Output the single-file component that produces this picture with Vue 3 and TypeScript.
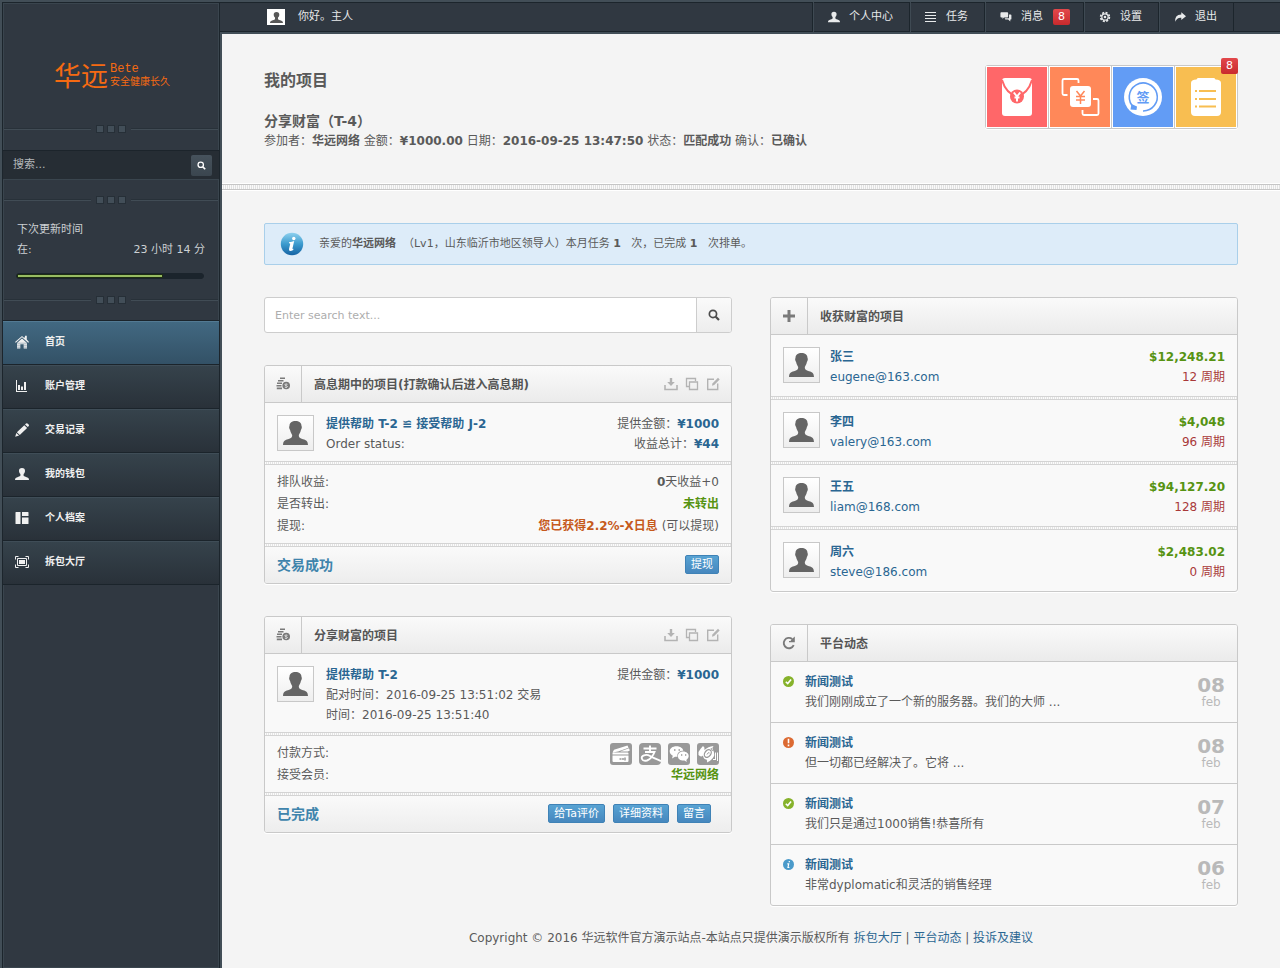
<script setup lang="ts">
import { ref } from 'vue'

interface NavItem { label: string; icon: string }
interface Member { name: string; email: string; amount: string; period: string }
interface News { state: string; title: string; text: string; day: string }

const nav: NavItem[] = [
  { label: '首页', icon: 'home' },
  { label: '账户管理', icon: 'chart' },
  { label: '交易记录', icon: 'pencil' },
  { label: '我的钱包', icon: 'user' },
  { label: '个人档案', icon: 'blocks' },
  { label: '拆包大厅', icon: 'frame' },
]
const active = ref('首页')

const topLinks = [
  { label: '个人中心', icon: 'user', count: 0 },
  { label: '任务', icon: 'list', count: 0 },
  { label: '消息', icon: 'chat', count: 8 },
  { label: '设置', icon: 'gear', count: 0 },
  { label: '退出', icon: 'exit', count: 0 },
]

const members: Member[] = [
  { name: '张三', email: 'eugene@163.com', amount: '$12,248.21', period: '12 周期' },
  { name: '李四', email: 'valery@163.com', amount: '$4,048', period: '96 周期' },
  { name: '王五', email: 'liam@168.com', amount: '$94,127.20', period: '128 周期' },
  { name: '周六', email: 'steve@186.com', amount: '$2,483.02', period: '0 周期' },
]

const news: News[] = [
  { state: 'ok', title: '新闻测试', text: '我们刚刚成立了一个新的服务器。我们的大师 ...', day: '08' },
  { state: 'warn', title: '新闻测试', text: '但一切都已经解决了。它将 ...', day: '08' },
  { state: 'ok', title: '新闻测试', text: '我们只是通过1000销售!恭喜所有', day: '07' },
  { state: 'info', title: '新闻测试', text: '非常dyplomatic和灵活的销售经理', day: '06' },
]

const progress = 78
const sideQuery = ref('')
const query = ref('')
</script>

<template>
  <svg class="defs" width="0" height="0" aria-hidden="true">
    <symbol id="i-person" viewBox="0 0 25 24">
      <path d="M12.500 0C16 0 18.500 1.500 18.500 5C19.200 5.500 18.800 8 17.900 9C17.500 11.500 16.200 13 15.800 14C15.600 16.500 17 17.500 20 18.200C23.500 19 24.800 20 25 24H0C.2 20 1.500 19 5 18.200C8 17.500 9.400 16.500 9.200 14C8.800 13 7.500 11.500 7.100 9C6.200 8 5.800 5.500 6.500 5C6.500 1.500 9 0 12.500 0Z" />
    </symbol>
    <symbol id="i-user" viewBox="0 0 14 14">
      <path d="M7 1c2 0 3.200 1.100 3 3.100-.1 1.400-.6 2.300-1.400 2.900v1.600c0 .6 1 .9 2.400 1.400 2 .6 3 1.200 3 3H0c0-1.800 1-2.400 3-3 1.400-.5 2.400-.8 2.400-1.400V7C4.600 6.400 4.100 5.500 4 4.100 3.800 2.100 5 1 7 1Z" />
    </symbol>
    <symbol id="i-home" viewBox="0 0 14 14">
      <path d="M10 1.500V.8h1.800v3.700L14 7l-.8.800L7 2.300.8 7.800 0 7l7-6 2.300 2z" />
      <path d="M7 3.500l5 4.500v5.500H8.700V9.300H5.300v4.200H2V8z" />
      <path d="M2 8.200h10M2 10.200h3M9 10.200h3M2 12.200h3M9 12.200h3" stroke="#3c6078" stroke-width=".4" />
    </symbol>
    <symbol id="i-chart" viewBox="0 0 14 14">
      <path d="M1 1h1v11h10v1H1zM3 6h2v5H3zM6 7.500h2V11H6zM9 3h2v8H9z" />
    </symbol>
    <symbol id="i-pencil" viewBox="0 0 14 14">
      <path d="M10 1.500l1-1Q12-.1 13.200 1.100T13.800 3l-1 1zM9.300 2.200l2.800 2.700-7.300 7L1.900 9.200zM1.300 9.900l2.800 2.600L.2 13.800z" />
    </symbol>
    <symbol id="i-blocks" viewBox="0 0 14 14">
      <path d="M1 1h4.500v12H1q-.5 0-.5-.5v-11Q.5 1 1 1zM7 1h6q.5 0 .5.500V5H7zM7 6.500h6.500v6q0 .5-.5.500H7z" />
    </symbol>
    <symbol id="i-frame" viewBox="0 0 14 14">
      <path d="M.5 4.500v-3h3M10.500 1.500h3v3M13.500 9.500v3h-3M3.500 12.500h-3v-3" fill="none" stroke="currentColor" />
      <path d="M2.500 3.500h9v7h-9z" fill="none" stroke="currentColor" />
      <path d="M4 5h6v4H4z" />
    </symbol>
    <symbol id="i-list" viewBox="0 0 12 12">
      <path d="M0 1h11v1H0zM0 4h11v1H0zM0 7h11v1H0zM0 10h11v1H0z" />
    </symbol>
    <symbol id="i-chat" viewBox="0 0 14 14">
      <path d="M1.500 1.500h7q1 0 1 1v4q0 1-1 1h-4L3 9.300V7.500H1.500q-1 0-1-1v-4q0-1 1-1z" />
      <path d="M10.500 4h1.800q1 0 1 1v4q0 1-1 1H12v2.300L9.500 10H6.600q-.9 0-1-1.500h3.900q1 0 1-1z" />
    </symbol>
    <symbol id="i-gear" viewBox="0 0 14 14">
      <circle cx="7" cy="7" r="5.100" fill="none" stroke="currentColor" stroke-width="2" stroke-dasharray="2.400 1.605" />
      <circle cx="7" cy="7" r="3.700" fill="none" stroke="currentColor" stroke-width="1.400" />
      <circle cx="7" cy="7" r="1.500" />
    </symbol>
    <symbol id="i-exit" viewBox="0 0 14 14">
      <path d="M8.500 1.500L14 6l-5.500 4.500V8Q3.500 7.500 1.600 12.500.3 4.500 8.500 4z" />
    </symbol>
    <symbol id="i-search" viewBox="0 0 14 14">
      <circle cx="5.800" cy="5.800" r="4.200" fill="none" stroke="currentColor" stroke-width="2" />
      <path d="M9 9l3.800 3.800" stroke="currentColor" stroke-width="2.600" />
    </symbol>
    <symbol id="i-coins" viewBox="0 0 14 14">
      <path d="M4 .5h5v1.600H4zM2 3h5.500v1.600H2zM1 5.500h5v1.600H1zM.5 8h5v1.600h-5zM.8 10.500h5.200v1.700H.8z" />
      <circle cx="10.200" cy="8.500" r="3.800" />
      <path d="M11.400 7.300q-2.400-.9-2.400.4 0 .7 1.200 1t1.100 1q-.1 1.300-2.400.4" fill="none" stroke="#f6f6f6" stroke-width=".9" />
    </symbol>
    <symbol id="i-plus" viewBox="0 0 14 14"><path d="M5.500 1h3v4.500H13v3H8.500V13h-3V8.500H1v-3h4.500z" /></symbol>
    <symbol id="i-refresh" viewBox="0 0 14 14">
      <path d="M11.700 9.200A5.200 5.200 0 1 1 10.200 3" fill="none" stroke="currentColor" stroke-width="1.900" />
      <path d="M12.800.5v5.800H7V5h1.500l1-1.500L11 2z" />
    </symbol>
    <symbol id="i-download" viewBox="0 0 14 14">
      <path d="M5.800 1h2.400v4h2.600L7 9 3.200 5h2.600z" />
      <path d="M1 8v4.500h12V8" fill="none" stroke="currentColor" stroke-width="1.600" />
    </symbol>
    <symbol id="i-copy" viewBox="0 0 14 14">
      <path d="M4 9.500H1.500v-8h9V4M4.500 5h8v7.500h-8z" fill="none" stroke="currentColor" stroke-width="1.300" />
    </symbol>
    <symbol id="i-edit" viewBox="0 0 14 14">
      <path d="M8 2.200H1.700v10.300h10V6.500" fill="none" stroke="currentColor" stroke-width="1.400" />
      <path d="M6 8.800l.4-2.200L12 .8l1.700 1.600L8.200 8.100z" />
    </symbol>
  </svg>

  <div class="app">
    <aside class="side">
      <div class="side-in">
        <a class="logo" href="#">
          <span class="logo-big">华远</span>
          <span class="logo-sub"><span>Bete</span><span class="logo-tag">安全健康长久</span></span>
        </a>
        <div class="sep"><i class="bar"></i><i class="sq"></i><i class="sq"></i><i class="sq"></i><i class="bar"></i></div>
        <form class="side-search" @submit.prevent>
          <input v-model="sideQuery" type="text" placeholder="搜索..." aria-label="搜索" />
          <button type="submit" aria-label="搜索"><svg class="g9"><use href="#i-search" /></svg></button>
        </form>
        <div class="sep"><i class="bar"></i><i class="sq"></i><i class="sq"></i><i class="sq"></i><i class="bar"></i></div>
        <div class="update">
          <div>下次更新时间</div>
          <div class="between"><span>在:</span><span>23 小时 14 分</span></div>
          <div class="meter"><div class="fill" :style="{ width: progress + '%' }"></div></div>
        </div>
        <div class="sep"><i class="bar"></i><i class="sq"></i><i class="sq"></i><i class="sq"></i><i class="bar"></i></div>
        <nav class="nav">
          <a v-for="n in nav" :key="n.label" href="#" :class="{ on: n.label === active }" @click.prevent="active = n.label">
            <svg class="g14"><use :href="'#i-' + n.icon" /></svg>{{ n.label }}
          </a>
        </nav>
      </div>
    </aside>

    <div class="right">
      <header class="top">
        <div class="hello"><span class="mini"><svg><use href="#i-user" /></svg></span>你好。主人</div>
        <nav class="links">
          <a v-for="t in topLinks" :key="t.label" href="#">
            <svg class="g12"><use :href="'#i-' + t.icon" /></svg>{{ t.label }}
            <span v-if="t.count" class="count">{{ t.count }}</span>
          </a>
        </nav>
      </header>

      <main class="main">
        <section class="intro">
          <div>
            <h1>我的项目</h1>
            <h2>分享财富（T-4）</h2>
            <p>参加者：<b>华远网络</b> 金额：<b>¥1000.00</b> 日期：<b>2016-09-25 13:47:50</b> 状态：<b>匹配成功</b> 确认：<b>已确认</b></p>
          </div>
          <div class="tiles">
            <a class="tile red" href="#" aria-label="红包">
              <svg viewBox="0 0 60 60">
                <rect x="15" y="11" width="30" height="38" rx="3" fill="#fff" />
                <path d="M15 13q4 13.500 15 16.500 11-3 15-16.500" fill="none" stroke="#ff6769" stroke-width="2" />
                <circle cx="30" cy="29.500" r="7" fill="#ff6769" />
                <path d="M26.800 25.500L30 29.500l3.200-4M27.500 30.500h5M30 29.500v5" stroke="#fff" stroke-width="2" fill="none" />
              </svg>
            </a>
            <a class="tile orange" href="#" aria-label="兑换">
              <svg viewBox="0 0 60 60">
                <path d="M17.500 28H14q-1.500 0-1.500-1.500v-13Q12.500 12 14 12h13q1.500 0 1.500 1.500V16M43 32h4q1.500 0 1.500 1.500v13Q48.500 48 47 48H34q-1.500 0-1.500-1.500V43" fill="none" stroke="#fff" stroke-width="1.800" />
                <rect x="20" y="19" width="21" height="21" rx="3" fill="#fff" />
                <path d="M26.500 24l4 5 4-5M26 29.500h9M26 33h9M30.500 29v8" stroke="#ff8859" stroke-width="1.500" fill="none" />
              </svg>
            </a>
            <a class="tile blue" href="#" aria-label="签到">
              <svg viewBox="0 0 60 60">
                <circle cx="30" cy="30" r="19" fill="#fff" />
                <path d="M21 40.500A14 14 0 1 1 30 44" fill="none" stroke="#629cf5" stroke-width="1.600" />
                <path d="M18.500 37l5.500 2.500-.5 3.500-6-.5z" fill="#629cf5" />
                <text x="30" y="35" text-anchor="middle" font-size="13" font-weight="bold" fill="#629cf5">签</text>
              </svg>
            </a>
            <a class="tile yellow" href="#" aria-label="任务单">
              <svg viewBox="0 0 60 60">
                <path d="M22 11h16q1 0 1.500 1.500Q45 12.500 45 16v29q0 4-4 4H19q-4 0-4-4V16q0-3.500 5.500-3.500Q21 11 22 11z" fill="#fff" />
                <path d="M19 24h2M23 24h17M19 32h2M23 32h17M19 39.500h2M23 39.500h17" stroke="#f8be51" stroke-width="1.800" />
              </svg>
            </a>
            <span class="count tile-count">8</span>
          </div>
        </section>
        <div class="rule"></div>

        <div class="content">
          <div class="alert">
            <svg viewBox="0 0 24 24">
              <defs><linearGradient id="ig" x1="0" y1="0" x2="0" y2="1"><stop offset="0" stop-color="#8dd0ee" /><stop offset=".5" stop-color="#3c9bce" /><stop offset="1" stop-color="#1563a4" /></linearGradient></defs>
              <circle cx="12" cy="12" r="11.200" fill="url(#ig)" />
              <circle cx="13.800" cy="6.500" r="1.700" fill="#fff" />
              <path d="M9 10.300q3-.2 5.200-1.300l-1.700 7.200q-.3 1.300 1.700.2-1.600 2.600-3.800 2.600-1.800 0-1.400-1.900l1.200-5q.2-1-1.200-.9z" fill="#fff" />
            </svg>
            <p>亲爱的<b>华远网络</b> &nbsp;（Lv1，山东临沂市地区领导人）本月任务 <b>1</b> &nbsp;&nbsp;次，已完成 <b>1</b> &nbsp;&nbsp;次排单。</p>
          </div>

          <div class="cols">
            <div class="col">
              <form class="search" @submit.prevent>
                <input v-model="query" type="text" placeholder="Enter search text..." aria-label="Search text" />
                <button type="submit" aria-label="Search"><svg class="g12"><use href="#i-search" /></svg></button>
              </form>

              <section class="card">
                <header class="head">
                  <span class="cell"><svg class="g14"><use href="#i-coins" /></svg></span>
                  <h3>高息期中的项目(打款确认后进入高息期)</h3>
                  <span class="acts">
                    <button v-for="a in ['download', 'copy', 'edit']" :key="a" type="button" :aria-label="a"><svg class="g14"><use :href="'#i-' + a" /></svg></button>
                  </span>
                </header>
                <div class="order">
                  <span class="avatar"><svg><use href="#i-person" /></svg></span>
                  <div class="grow"><a href="#"><b>提供帮助 T-2 ≌ 接受帮助 J-2</b></a><br />Order status:</div>
                  <div class="num">提供金额：<b class="navy">¥1000</b><br />收益总计：<b class="navy">¥44</b></div>
                </div>
                <div class="strip"></div>
                <dl class="facts">
                  <div><dt>排队收益:</dt><dd><b>0</b>天收益+0</dd></div>
                  <div><dt>是否转出:</dt><dd><b class="green">未转出</b></dd></div>
                  <div><dt>提现:</dt><dd><b class="rust">您已获得2.2%-X日息</b> (可以提现)</dd></div>
                </dl>
                <div class="strip"></div>
                <footer class="foot"><strong>交易成功</strong><button class="btn" type="button">提现</button></footer>
              </section>

              <section class="card">
                <header class="head">
                  <span class="cell"><svg class="g14"><use href="#i-coins" /></svg></span>
                  <h3>分享财富的项目</h3>
                  <span class="acts">
                    <button v-for="a in ['download', 'copy', 'edit']" :key="a" type="button" :aria-label="a"><svg class="g14"><use :href="'#i-' + a" /></svg></button>
                  </span>
                </header>
                <div class="order">
                  <span class="avatar"><svg><use href="#i-person" /></svg></span>
                  <div class="grow"><a href="#"><b>提供帮助 T-2</b></a><br />配对时间：2016-09-25 13:51:02 交易<br />时间：2016-09-25 13:51:40</div>
                  <div class="num">提供金额：<b class="navy">¥1000</b></div>
                </div>
                <div class="strip"></div>
                <dl class="facts">
                  <div>
                    <dt>付款方式:</dt>
                    <dd class="pays">
                      <svg viewBox="0 0 22 22">
                        <rect width="22" height="22" rx="3" fill="#999" />
                        <path d="M2.500 9.500L4 6.800 17.500 2.500l1 2.200L8 8.500zM10 8.500l9-3.300.8 2.300-2 1zM3.500 9.500h14q1 0 1 1v1h-16v-1q0-1 1-1zM2.500 12.500h16V18q0 1-1 1h-14q-1 0-1-1z" fill="#fff" />
                        <path d="M9.500 16h2M12 16h2M15 14.500v3" stroke="#999" stroke-width="1.500" />
                      </svg>
                      <svg viewBox="0 0 22 22">
                        <rect width="22" height="22" rx="4" fill="#999" />
                        <path d="M4.500 5.500h13M11 2.500v6M6 9h9.500Q13 15.500 8 17.500q-4 1-5-1.500t2-3.700 6 .7 11 5" fill="none" stroke="#fff" stroke-width="1.900" />
                      </svg>
                      <svg viewBox="0 0 22 22">
                        <rect width="22" height="22" rx="3" fill="#999" />
                        <path d="M8.500 3.200c4 0 6.500 2.200 6.800 4.600-4 0-6.600 2.500-5.800 6H7L4 15.500l.8-2.700C-1 9 2 3.200 8.500 3.200z" fill="#fff" />
                        <path d="M15 8.600c6 0 7.500 5.800 3.300 8.300l.5 2-2.300-1.300C7.500 18 8.500 8.600 15 8.600z" fill="#fff" />
                        <path d="M6 7h1.500M10.500 7H12M13 12h1.300M17 12h1.300" stroke="#999" stroke-width="1.400" />
                      </svg>
                      <svg viewBox="0 0 22 22">
                        <rect width="22" height="22" rx="3" fill="#999" />
                        <path d="M1.500 9Q4 5 6 3q2 1 1.500 4Q11 3.500 16.500 3 14.500 5 16 7q3 5-1 9-2 2-5 3.500.5-2-.5-3-3 0-3.500-4-2 2-4.500-.5z" fill="#fff" />
                        <ellipse cx="10.800" cy="10.500" rx="3" ry="4.200" transform="rotate(35 10.800 10.500)" fill="none" stroke="#999" stroke-width="1.300" />
                        <path d="M10 11.500q1.500-3 2.500-1.500M14 5l1.500 3" fill="none" stroke="#999" />
                        <path d="M18 9.500h1v7.500h-3v-1h2zM20 9.500h1V18h-1z" fill="#fff" />
                      </svg>
                    </dd>
                  </div>
                  <div><dt>接受会员:</dt><dd><b class="green">华远网络</b></dd></div>
                </dl>
                <div class="strip"></div>
                <footer class="foot multi">
                  <strong>已完成</strong>
                  <button class="btn" type="button">给Ta评价</button>
                  <button class="btn" type="button">详细资料</button>
                  <button class="btn" type="button">留言</button>
                </footer>
              </section>
            </div>

            <div class="col">
              <section class="card">
                <header class="head"><span class="cell"><svg class="g14"><use href="#i-plus" /></svg></span><h3>收获财富的项目</h3></header>
                <template v-for="(m, i) in members" :key="m.name">
                  <div v-if="i" class="strip"></div>
                  <div class="member">
                    <span class="avatar"><svg><use href="#i-person" /></svg></span>
                    <div class="grow"><a href="#"><b>{{ m.name }}</b></a><br /><a href="#">{{ m.email }}</a></div>
                    <div class="num"><b class="green">{{ m.amount }}</b><br /><span class="crimson">{{ m.period }}</span></div>
                  </div>
                </template>
              </section>

              <section class="card">
                <header class="head"><span class="cell"><svg class="g14"><use href="#i-refresh" /></svg></span><h3>平台动态</h3></header>
                <article v-for="(n, i) in news" :key="i" class="news">
                  <svg class="dot" :class="n.state" viewBox="0 0 11 11">
                    <circle cx="5.500" cy="5.500" r="5.500" />
                    <path v-if="n.state === 'ok'" d="M2.800 5.700l1.900 1.900 3.400-4.200" class="ln" />
                    <path v-else-if="n.state === 'warn'" d="M5.500 1.800v4.500M5.500 7.500v1.700" class="ln" />
                    <path v-else d="M6.300 2v1.300M4.300 4.800h1.400L5 8.500h1.400" class="ln thin" />
                  </svg>
                  <div class="grow"><a href="#"><b>{{ n.title }}</b></a><br />{{ n.text }}</div>
                  <div class="date"><b>{{ n.day }}</b><span>feb</span></div>
                </article>
              </section>
            </div>
          </div>
        </div>

        <footer class="copy">Copyright © 2016 华远软件官方演示站点-本站点只提供演示版权所有 <a href="#">拆包大厅</a> | <a href="#">平台动态</a> | <a href="#">投诉及建议</a></footer>
      </main>
    </div>
  </div>
</template>

<style>
body {
  background: #f4f4f4;
}
</style>

<style scoped>
* {
  box-sizing: border-box;
}
.app {
  display: grid;
  grid-template-columns: 220px 1fr;
  min-height: 100vh;
  font: 12px/20px "DejaVu Sans", "Noto Sans CJK SC", sans-serif;
  color: #5a5a5a;
}
h1, h2, h3, p, dl, dd {
  margin: 0;
}
a {
  color: #2a6692;
  text-decoration: none;
}
svg {
  display: block;
  flex: none;
  fill: currentColor;
}
.defs {
  position: absolute;
}
.g9 { width: 9px; height: 9px; }
.g12 { width: 12px; height: 12px; }
.g14 { width: 14px; height: 14px; }
input, button {
  font: inherit;
  border: 0;
  margin: 0;
  outline: 0;
}
button {
  cursor: pointer;
}

/* sidebar */
.side {
  display: flex;
  padding: 2px 0 0 2px;
  background: #424e57;
}
.side-in {
  flex: 1;
  border: 1px solid #1c252c;
  border-bottom: 0;
  background: #303841;
  box-shadow: inset 0 0 0 1px #3a454e;
  font-size: 11px;
  color: #ccd0d3;
}
.logo {
  display: flex;
  justify-content: center;
  align-items: center;
  gap: 2px;
  height: 121px;
  padding: 22px 0 0 2px;
  color: #f56a12;
}
.logo-big {
  font: 27px/30px "Noto Sans CJK SC", sans-serif;
}
.logo-sub {
  font: 12px/12px "Liberation Mono", monospace;
  display: flex;
  flex-direction: column;
}
.logo-tag {
  font: 10px/12px "Noto Sans CJK SC", sans-serif;
}
.sep {
  display: flex;
  align-items: center;
  gap: 3px;
  height: 10px;
  padding: 0 1px;
}
.sep .bar {
  flex: 1;
  height: 2px;
  border-top: 1px solid #283139;
  background: #414c55;
}
.sep .bar:first-child { margin-right: 2px; }
.sep .bar:last-child { margin-left: 2px; }
.sep .sq {
  width: 8px;
  height: 8px;
  border: 1px solid #262f37;
  background: #424e58;
}
.side-search {
  display: flex;
  align-items: center;
  gap: 4px;
  height: 30px;
  margin: 16px 0 15px;
  padding: 0 7px 0 10px;
  background: #262d34;
  border-top: 1px solid #1c242b;
  border-bottom: 1px solid #3a454e;
}
.side-search input {
  flex: 1;
  min-width: 0;
  padding: 0;
  background: none;
  color: #b4b8bb;
}
.side-search input::placeholder { color: #b4b8bb; opacity: 1; }
.side-search button {
  display: grid;
  place-items: center;
  width: 21px;
  height: 21px;
  padding: 0;
  border-radius: 2px;
  background: linear-gradient(#46525c, #3b464f);
  color: #fff;
}
.update {
  padding: 15px 14px 16px;
}
.between {
  display: flex;
  justify-content: space-between;
}
.meter {
  height: 6px;
  margin: 13px 1px 0 -1px;
  padding: 1px;
  border-radius: 3px;
  border: 1px solid #1b242c;
  background: #1b242c;
}
.meter .fill {
  height: 2px;
  background: #98bd63;
  box-shadow: 0 0 0 1px #1e2e14;
}
.nav {
  margin-top: 15px;
  border-bottom: 1px solid #1b242b;
}
.nav a {
  display: flex;
  align-items: center;
  gap: 16px;
  height: 44px;
  padding: 0 12px 2px;
  border-top: 1px solid #1b242b;
  background: linear-gradient(#36434c, #293139);
  box-shadow: inset 0 1px #3f4d57;
  font-size: 10px;
  font-weight: bold;
  color: #f0f0f0;
}
.nav a.on {
  background: linear-gradient(#426982, #335166);
  box-shadow: inset 0 1px #537a93;
}

/* top bar */
.right {
  display: flex;
  flex-direction: column;
  min-width: 0;
}
.top {
  display: flex;
  justify-content: space-between;
  height: 34px;
  border-top: 2px solid #424e57;
  border-bottom: 2px solid #424e57;
  background: #303841;
  box-shadow: inset 0 1px #1c252c, inset 0 -1px #1c252c;
  font-size: 11px;
  color: #e8eaeb;
}
.hello {
  display: flex;
  align-items: center;
  gap: 13px;
  padding: 0 0 1px 47px;
}
.mini {
  display: grid;
  place-items: end center;
  width: 18px;
  height: 16px;
  padding-bottom: 1px;
  background: #fff;
  color: #585858;
}
.mini svg { width: 13px; height: 13px; }
.links {
  display: flex;
  margin-right: 46px;
  border-right: 1px solid #1c252c;
}
.links a {
  display: flex;
  align-items: center;
  padding: 0 16px 1px 14px;
  border-left: 1px solid #1c252c;
  box-shadow: inset 1px 0 #3f4a53;
  color: #e8eaeb;
}
.links svg { width: 14px; margin-right: 8px; }
.count {
  width: 17px;
  height: 16px;
  margin: 0 -3px 0 10px;
  border-radius: 2px;
  background: linear-gradient(#e2484b, #c92a2d);
  color: #fff;
  font-size: 11px;
  line-height: 16px;
  text-align: center;
}

/* page */
.main {
  flex: 1;
  border-left: 2px solid #424e57;
  background: #f4f4f4;
}
.intro {
  display: flex;
  justify-content: space-between;
  align-items: flex-start;
  height: 150px;
  padding: 37px 42px 0;
}
h1 {
  font-size: 16px;
  margin-bottom: 20px;
}
h2 { font-size: 14px; }
.tiles {
  position: relative;
  display: flex;
  gap: 1px;
  margin-top: -6px;
  border: 1px solid #c8c8c8;
  border-radius: 3px;
  background: #c8c8c8;
  box-shadow: 0 1px #fff;
}
.tile {
  width: 62px;
  height: 62px;
  border: 1px solid #fff;
}
.tile svg { width: 60px; height: 60px; }
.red { background: #ff6769; }
.orange { background: #ff8859; }
.blue { background: #629cf5; }
.yellow { background: #f8be51; }
.tile-count {
  position: absolute;
  top: -8px;
  right: -1px;
  margin: 0;
}
.rule {
  height: 6px;
  border: 1px solid #c6c6c6;
  border-width: 1px 0;
  background: repeating-linear-gradient(90deg, #fafafa 0 1px, #e2e2e2 1px 2px);
  box-shadow: 0 -1px #fff, 0 1px #fff;
}
.content { padding: 33px 42px 0; }
.alert {
  display: flex;
  align-items: center;
  gap: 15px;
  height: 42px;
  padding: 0 15px;
  border: 1px solid #a9cfea;
  border-radius: 2px;
  background: #ddecf9;
  font-size: 11px;
}
.alert svg { width: 24px; height: 24px; }
.cols {
  display: grid;
  grid-template-columns: 1fr 1fr;
  gap: 38px;
  align-items: start;
  padding-top: 32px;
}
.col {
  display: grid;
  gap: 32px;
  min-width: 0;
}
.search {
  display: flex;
  height: 36px;
  border: 1px solid #cdcdcd;
  border-radius: 3px;
  background: #fff;
}
.search input {
  flex: 1;
  min-width: 0;
  padding: 2px 10px 0;
  background: none;
  color: #5a5a5a;
  font-size: 11px;
}
.search input::placeholder { color: #adadad; opacity: 1; }
.search button {
  display: grid;
  place-items: center;
  width: 35px;
  padding: 0;
  border-left: 1px solid #cdcdcd;
  border-radius: 0 2px 2px 0;
  background: linear-gradient(#fafafa, #ededed);
  color: #4c4c4c;
}
.card {
  border: 1px solid #c9c9c9;
  border-radius: 3px;
  background: #f9f9f9;
  box-shadow: 0 1px #fff;
}
.head {
  display: flex;
  align-items: center;
  height: 37px;
  border-bottom: 1px solid #c9c9c9;
  border-radius: 2px 2px 0 0;
  background: linear-gradient(#fafafa, #ebebeb);
}
.cell {
  display: grid;
  place-items: center;
  align-self: stretch;
  width: 37px;
  border-right: 1px solid #c9c9c9;
  color: #7a7a7a;
}
h3 {
  flex: 1;
  padding: 2px 0 0 12px;
  font-size: 12px;
  color: #555;
}
.acts {
  display: flex;
  gap: 7px;
  padding-right: 11px;
}
.acts button {
  padding: 0;
  background: none;
  color: #b3b3b3;
}
.order, .member, .news {
  display: flex;
  align-items: flex-start;
}
.order {
  gap: 12px;
  padding: 11px 12px 7px;
}
.member {
  gap: 10px;
  padding: 12px 12px 9px;
}
.grow {
  flex: 1;
  min-width: 0;
}
.num { text-align: right; }
.avatar {
  display: grid;
  place-items: center;
  width: 37px;
  height: 36px;
  border: 1px solid #c8c8c8;
  background: linear-gradient(#fff, #eee);
  color: #656565;
}
.order .avatar { margin-top: 1px; }
.avatar svg { width: 25px; height: 24px; }
.strip {
  height: 4px;
  border: 1px solid #d4d4d4;
  border-width: 1px 0;
  background: repeating-linear-gradient(90deg, #fcfcfc 0 1px, #e4e4e4 1px 2px);
}
.facts {
  padding: 6px 12px;
  line-height: 22px;
}
.facts > div {
  display: flex;
  justify-content: space-between;
  height: 22px;
}
.pays {
  display: flex;
  gap: 7px;
  padding-top: 1px;
}
.pays svg { width: 22px; height: 22px; }
.foot {
  display: flex;
  align-items: center;
  gap: 8px;
  height: 36px;
  padding: 0 12px 1px;
  border-radius: 0 0 2px 2px;
  background: linear-gradient(#fafafa, #ededed);
}
.foot.multi { padding-right: 20px; }
.foot strong {
  flex: 1;
  font-size: 14px;
  color: #3f84ac;
}
.btn {
  height: 19px;
  padding: 0 5px;
  border: 1px solid #3f82b6;
  border-radius: 2px;
  background: linear-gradient(#58a3d3, #4687be);
  color: #fff;
  font-size: 11px;
  line-height: 17px;
}
.navy { color: #2a6692; }
.green { color: #569312; }
.rust { color: #c65a1c; }
.crimson { color: #a93939; }
.news {
  gap: 11px;
  padding: 10px 12px;
}
.news + .news { border-top: 1px solid #c9c9c9; }
.dot {
  width: 11px;
  height: 11px;
  margin-top: 4px;
}
.dot .ln { fill: none; stroke: #fff; stroke-width: 1.6; }
.dot .thin { stroke-width: 1.2; }
.ok { color: #86b22b; }
.warn { color: #dc6a32; }
.info { color: #4a9aca; }
.date {
  display: flex;
  flex-direction: column;
  align-items: center;
  padding-top: 3px;
  color: #b9b9b9;
  line-height: 14px;
}
.date b {
  font-size: 20px;
  line-height: 20px;
}
.copy {
  padding: 22px 42px 20px;
  text-align: center;
}
</style>
